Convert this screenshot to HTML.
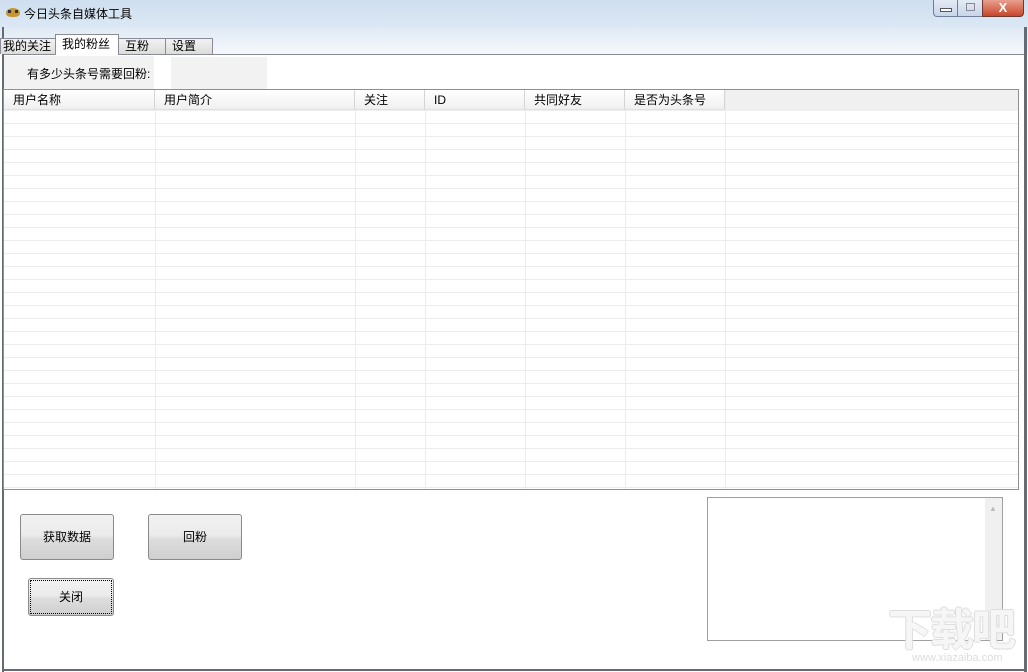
<!DOCTYPE html>
<html><head><meta charset="utf-8"><style>
*{margin:0;padding:0;box-sizing:border-box}
body{width:1028px;height:672px;overflow:hidden;background:#fff;font-family:"Liberation Sans","WenQuanYi Zen Hei","Noto Sans CJK SC",sans-serif;font-size:12px;color:#000;position:relative}
.abs{position:absolute}
.title{left:0;top:0;width:1028px;height:27px;background:linear-gradient(#cfdff0,#dbe7f4);}
.tabbg{left:0;top:27px;width:1028px;height:27px;background:linear-gradient(#dfe9f5,#f6f8fb)}
.tab{position:absolute;height:16px;top:38px;border:1px solid #898c95;border-bottom:none;background:linear-gradient(#f2f2f2,#dcdcdc);font-size:12px;line-height:14px;padding-left:6px}
.btn{position:absolute;border:1px solid #8a8a8a;border-radius:3px;background:linear-gradient(#f2f2f2 0%,#ebebeb 45%,#dddddd 55%,#cfcfcf 100%);text-align:center;font-size:12px}
.col{position:absolute;top:90px;height:399px;border-left:1px solid #ececec}
.hd{position:absolute;top:90px;height:20px;line-height:20px;padding-left:9px;background:linear-gradient(#fff,#f0f0f0);border-right:1px solid #d5d5d5;border-bottom:1px solid #e0e0e0}
</style></head><body>
<div class="abs title"></div>
<div class="abs" style="left:6px;top:8px;width:14px;height:9px;background:#c8962c;border-radius:50% 50% 40% 40%"></div>
<div class="abs" style="left:8px;top:10px;width:3px;height:3px;background:#333;"></div>
<div class="abs" style="left:15px;top:10px;width:3px;height:3px;background:#333;"></div>
<div class="abs" style="left:24px;top:5px;font-size:12px">今日头条自媒体工具</div>
<div class="abs" style="left:933px;top:0;width:25px;height:17px;border:1px solid #6e7f96;border-top:none;border-radius:0 0 0 4px;background:linear-gradient(#e3ebf5,#c8d6e8)"><div class="abs" style="left:6px;top:8px;width:12px;height:4px;border:1px solid #556;background:#fff"></div></div>
<div class="abs" style="left:957px;top:0;width:26px;height:17px;border:1px solid #6e7f96;border-top:none;background:linear-gradient(#e3ebf5,#c8d6e8)"><div class="abs" style="left:8px;top:3px;width:9px;height:8px;border:1px solid #889;"></div></div>
<div class="abs" style="left:982px;top:0;width:42px;height:17px;border:1px solid #6e3a30;border-top:none;border-radius:0 0 4px 0;background:linear-gradient(#e8a08e,#c9452b);color:#fff;font-weight:bold;text-align:center;font-size:13px;line-height:15px">X</div>
<div class="abs tabbg"></div>
<div class="abs" style="left:2px;top:27px;width:2px;height:645px;background:#646b75"></div>
<div class="abs" style="left:1024px;top:27px;width:3px;height:645px;background:#646b75"></div>
<div class="abs" style="left:2px;top:669px;width:1025px;height:2px;background:#646b75"></div>
<div class="abs" style="left:4px;top:54px;width:1020px;height:615px;background:#fff;border-top:1px solid #898c95"></div>
<div class="tab" style="left:0;width:56px;padding-left:2px">我的关注</div>
<div class="tab" style="left:55px;top:34px;height:21px;width:64px;background:#fff;line-height:18px">我的粉丝</div>
<div class="tab" style="left:118px;width:48px">互粉</div>
<div class="tab" style="left:165px;width:48px">设置</div>
<div class="abs" style="left:4px;top:56px;width:150px;height:33px;background:#f2f2f2"></div>
<div class="abs" style="left:27px;top:65px">有多少头条号需要回粉:</div>
<div class="abs" style="left:171px;top:57px;width:96px;height:32px;background:#f2f2f2"></div>
<div class="abs" style="left:3px;top:89px;width:1016px;height:401px;border:1px solid #8f8f8f;background:repeating-linear-gradient(#fff 0 12px,#ececec 12px 13px);background-position:0 21px"></div>
<div class="abs" style="left:4px;top:90px;width:1014px;height:21px;background:#f0f0f0"></div>
<div class="col" style="left:155px"></div><div class="col" style="left:355px"></div><div class="col" style="left:425px"></div><div class="col" style="left:525px"></div><div class="col" style="left:625px"></div><div class="col" style="left:725px"></div>
<div class="hd" style="left:4px;width:151px">用户名称</div>
<div class="hd" style="left:155px;width:200px">用户简介</div>
<div class="hd" style="left:355px;width:70px">关注</div>
<div class="hd" style="left:425px;width:100px">ID</div>
<div class="hd" style="left:525px;width:100px">共同好友</div>
<div class="hd" style="left:625px;width:100px">是否为头条号</div>
<div class="btn" style="left:20px;top:514px;width:94px;height:46px;line-height:44px">获取数据</div>
<div class="btn" style="left:148px;top:514px;width:94px;height:46px;line-height:44px">回粉</div>
<div class="btn" style="left:28px;top:578px;width:86px;height:38px;line-height:36px;outline:1px dotted #000;outline-offset:-3px">关闭</div>
<div class="abs" style="left:707px;top:497px;width:296px;height:144px;border:1px solid #a0a0a0;background:#fff"></div>
<div class="abs" style="left:985px;top:498px;width:17px;height:142px;background:#f0f0f0"></div>
<div class="abs" style="left:989px;top:504px;color:#bbb;font-size:8px">▲</div>
<div class="abs" style="left:989px;top:628px;color:#bbb;font-size:8px">▼</div>
<div class="abs" style="left:888px;top:607px;color:#f6f6f6;font-size:44px;font-weight:bold;letter-spacing:-2px;line-height:48px;text-shadow:1px 0 #ddd,-1px 0 #ddd,0 1px #ddd,0 -1px #ddd">下载吧</div>
<div class="abs" style="left:912px;top:652px;color:#ddd;font-size:11px">www.xiazaiba.com</div>
</body></html>
